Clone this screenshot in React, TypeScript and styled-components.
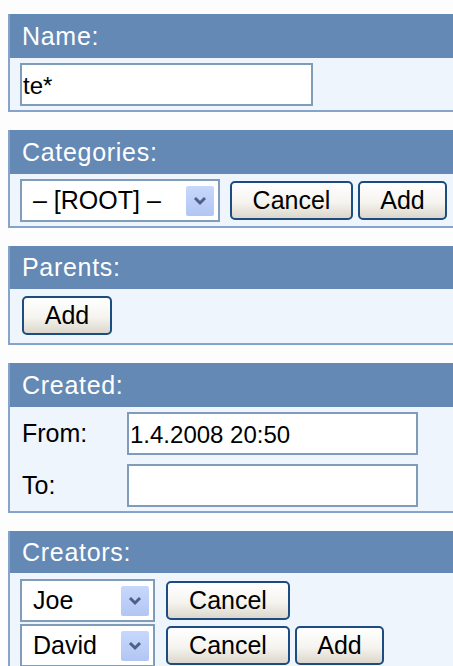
import React from 'react';
import styled, { createGlobalStyle } from 'styled-components';

const GlobalStyle = createGlobalStyle`
	body {
		margin: 0;
		background: #fdfdfd;
		font-family: 'Liberation Sans', Arial, sans-serif;
		overflow: hidden;
	}
`;

const Page = styled.div`
	display: flex;
	flex-direction: column;
	gap: 18px;
	padding: 14px 0 0 8px;
`;

const Panel = styled.section`
	border-left: 2px solid #86a4ca;
	border-bottom: 2px solid #86a4ca;
	background: #eef5fd;
`;

const PanelHeader = styled.div<{ $height?: number }>`
	height: ${({ $height }) => $height ?? 44}px;
	line-height: ${({ $height }) => $height ?? 44}px;
	padding-left: 12px;
	background: #6489b5;
	color: #ffffff;
	font-size: 25px;
	letter-spacing: 0.7px;
`;

const PanelBody = styled.div<{ $pad?: string }>`
	display: flex;
	flex-direction: column;
	gap: 2px;
	padding: ${({ $pad }) => $pad || '5px 0 4px 10px'};
`;

const Row = styled.div<{ $gap?: number }>`
	display: flex;
	align-items: center;
	gap: ${({ $gap }) => $gap ?? 5}px;
`;

const TextInput = styled.input`
	box-sizing: border-box;
	width: ${({ width }) => width || 293}px;
	height: 43px;
	border: 2px solid #7f9db9;
	background: #ffffff;
	padding: 2px 1px 0;
	font-family: inherit;
	font-size: 24px;
	color: #000000;
	outline: none;
`;

const Dropdown = styled.div<{ $width: number }>`
	box-sizing: border-box;
	display: flex;
	flex-shrink: 0;
	align-items: center;
	width: ${({ $width }) => $width}px;
	height: 43px;
	border: 2px solid #7f9db9;
	background: #ffffff;
	padding: 0 4px 0 11px;
	font-size: 25px;
	color: #000000;
`;

const DropdownArrow = styled.span`
	display: flex;
	align-items: center;
	justify-content: center;
	width: 28px;
	height: 30px;
	margin-left: auto;
	border-radius: 2px;
	background: linear-gradient(#c8d8fc, #b2c6f4);
`;

const Button = styled.button<{ $width: number }>`
	box-sizing: border-box;
	flex-shrink: 0;
	width: ${({ $width }) => $width}px;
	height: 39px;
	border: 2px solid #1d4d80;
	border-radius: 5px;
	background: linear-gradient(#ffffff, #f5f4ef 55%, #dcd7cc);
	font-family: inherit;
	font-size: 25px;
	color: #000000;
	padding: 0;
`;

const FieldGrid = styled.div`
	display: grid;
	grid-template-columns: 107px 291px;
	row-gap: 9px;
	align-items: center;
`;

const FieldLabel = styled.label`
	padding-left: 2px;
	font-size: 25px;
	color: #000000;
`;

function Select({ value, width }: { value: string; width: number }) {
	return (
		<Dropdown $width={width}>
			<span>{value}</span>
			<DropdownArrow>
				<svg width="14" height="10" viewBox="0 0 14 10">
					<path d="M2 2 L7 7 L12 2" fill="none" stroke="#4d6185" strokeWidth="3" />
				</svg>
			</DropdownArrow>
		</Dropdown>
	);
}

function SearchForm() {
	return (
		<Page>
			<GlobalStyle />
			<Panel>
				<PanelHeader>Name:</PanelHeader>
				<PanelBody>
					<TextInput defaultValue="te*" />
				</PanelBody>
			</Panel>
			<Panel>
				<PanelHeader>Categories:</PanelHeader>
				<PanelBody>
					<Row $gap={5}>
						<Select value="– [ROOT] –" width={200} />
						<Button $width={123} style={{ marginLeft: 5 }}>
							Cancel
						</Button>
						<Button $width={89}>Add</Button>
					</Row>
				</PanelBody>
			</Panel>
			<Panel>
				<PanelHeader $height={43}>Parents:</PanelHeader>
				<PanelBody $pad="7px 0 8px 12px">
					<Row>
						<Button $width={90}>Add</Button>
					</Row>
				</PanelBody>
			</Panel>
			<Panel>
				<PanelHeader>Created:</PanelHeader>
				<PanelBody>
					<FieldGrid>
						<FieldLabel>From:</FieldLabel>
						<TextInput width={291} defaultValue="1.4.2008 20:50" />
						<FieldLabel>To:</FieldLabel>
						<TextInput width={291} />
					</FieldGrid>
				</PanelBody>
			</Panel>
			<Panel>
				<PanelHeader $height={42}>Creators:</PanelHeader>
				<PanelBody $pad="6px 0 4px 10px">
					<Row $gap={11}>
						<Select value="Joe" width={135} />
						<Button $width={124}>Cancel</Button>
					</Row>
					<Row $gap={11}>
						<Select value="David" width={135} />
						<Button $width={124}>Cancel</Button>
						<Button $width={89} style={{ marginLeft: -6 }}>
							Add
						</Button>
					</Row>
				</PanelBody>
			</Panel>
		</Page>
	);
}

export default function App() {
	return <SearchForm />;
}
